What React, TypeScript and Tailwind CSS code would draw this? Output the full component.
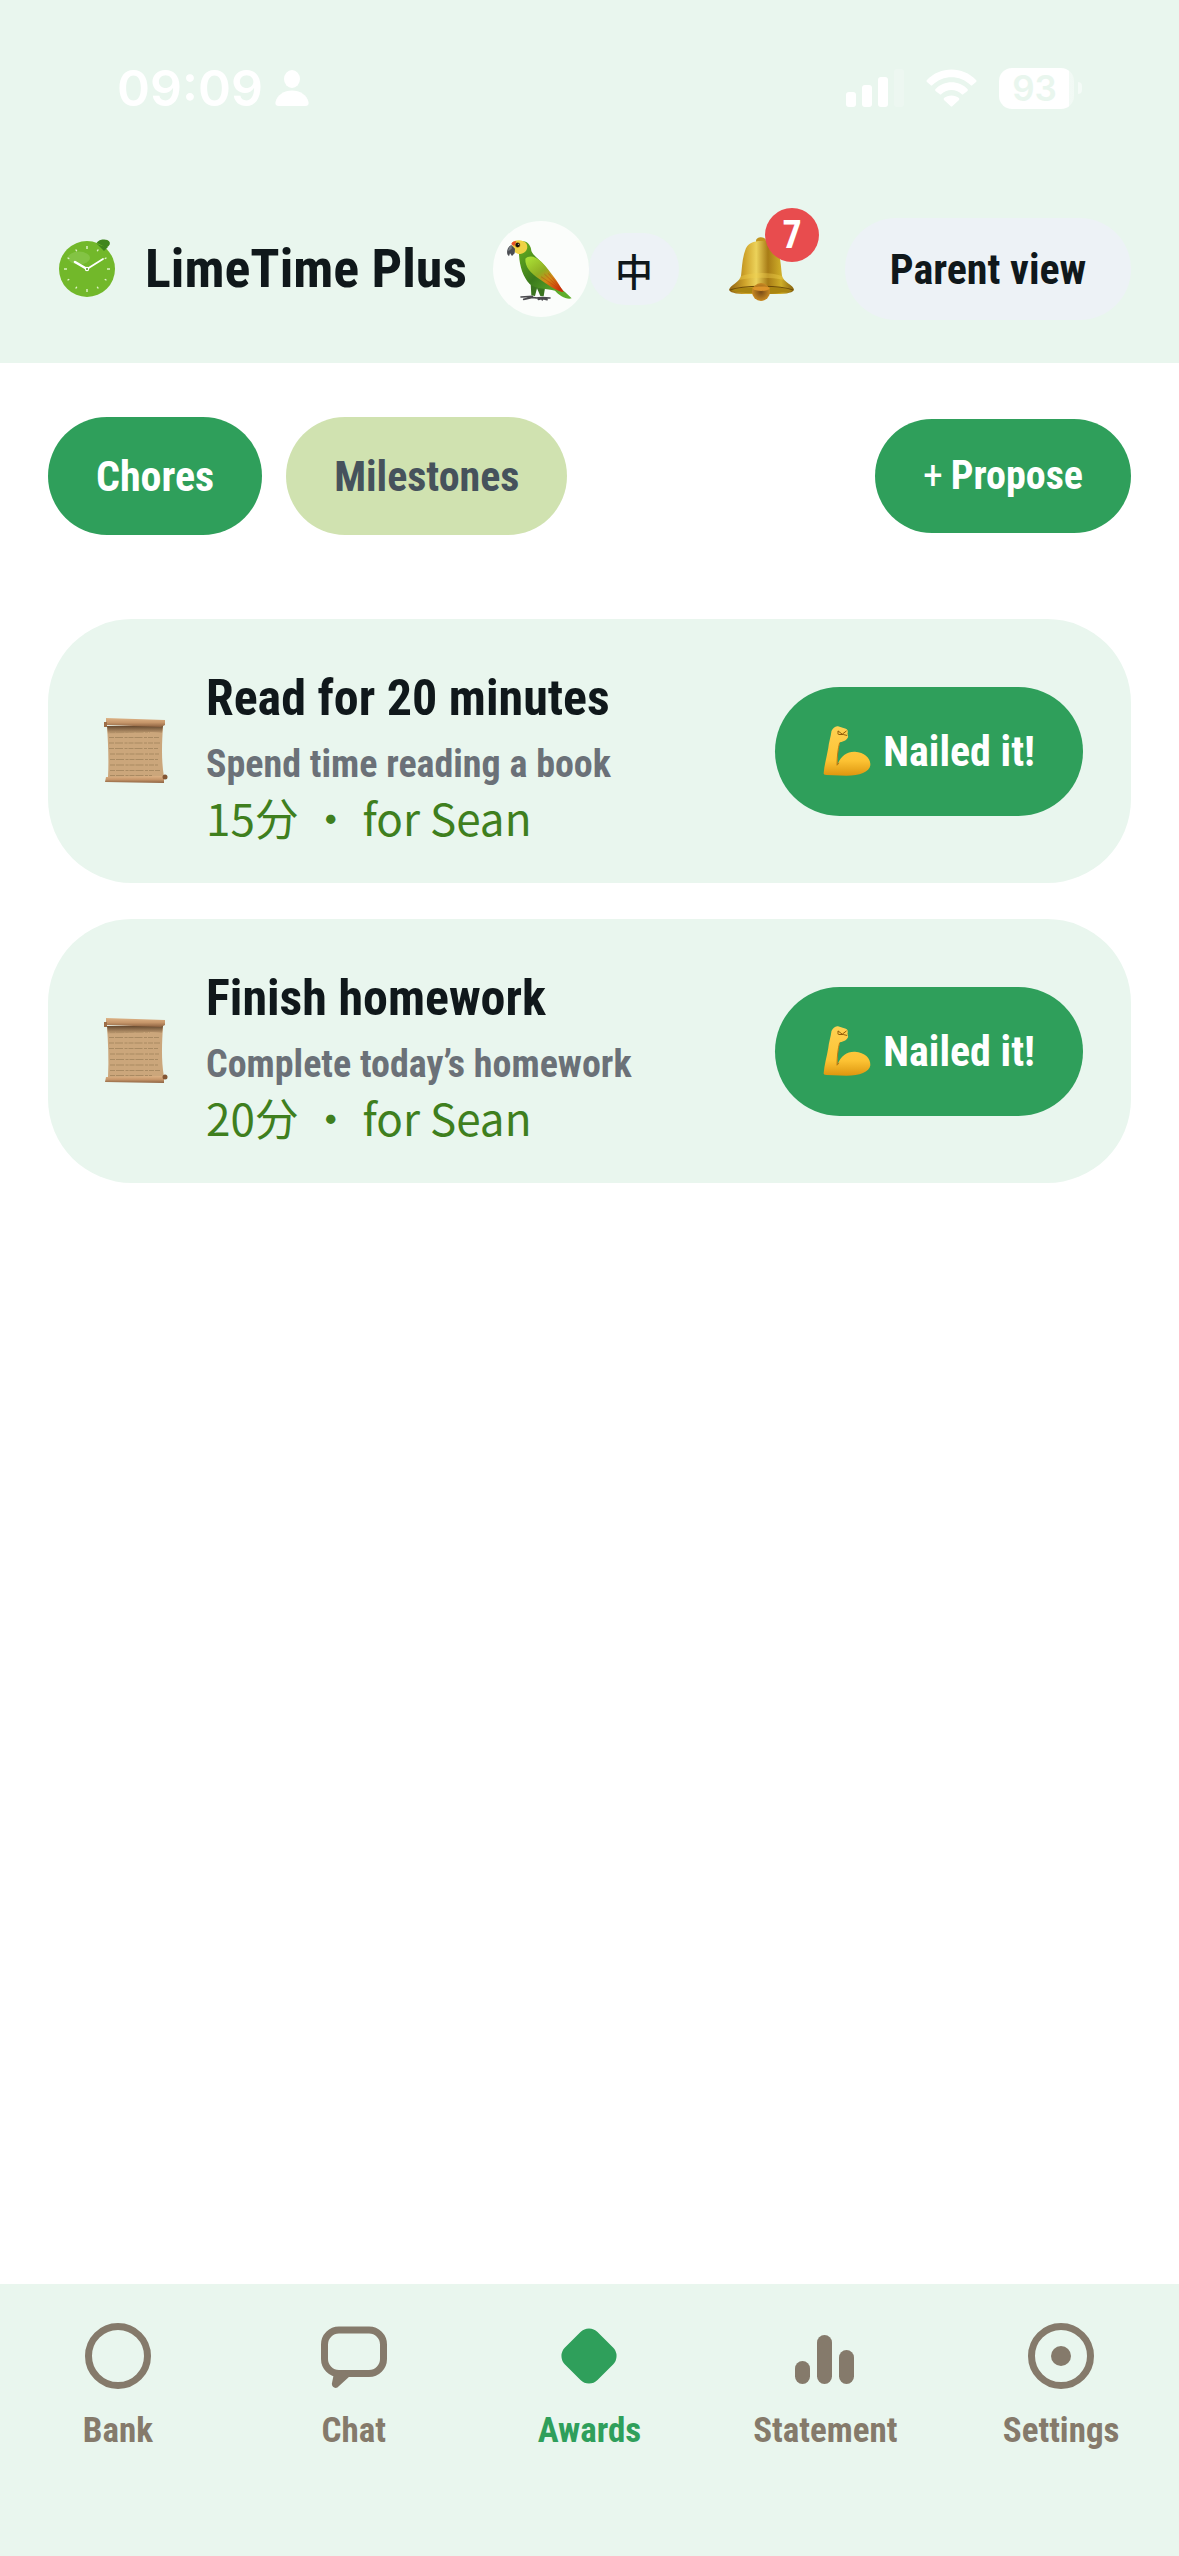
import { useState } from "react"
import clsx from "clsx"

type Tab = "chores" | "milestones"

const CHORES = [
  { id: 1, title: "Read for 20 minutes", note: "Spend time reading a book", minutes: 15, kid: "Sean" },
  { id: 2, title: "Finish homework", note: "Complete today’s homework", minutes: 20, kid: "Sean" },
]

/* ---------- status bar ---------- */

function StatusBar() {
  return (
    <div className="flex items-center justify-between pl-[117px] pr-[97px] pt-[60px] text-white">
      <div className="flex items-center gap-3">
        <span className="font-[Inter,sans-serif] text-[50px] leading-[56px] font-semibold">09:09</span>
        <svg width="34" height="36" viewBox="0 0 34 36" fill="currentColor" aria-hidden="true">
          <ellipse cx="17" cy="9" rx="8" ry="9" />
          <path d="M4 36C1 36 0 34.500 0.500 32 2 25 9 20.500 17 20.500S32 25 33.500 32C34 34.500 33 36 30 36Z" />
        </svg>
      </div>
      <div className="flex items-center gap-[22px]">
        <svg width="58" height="38" viewBox="0 0 58 38" fill="currentColor" aria-hidden="true">
          <rect x="0" y="23" width="10" height="15" rx="3" />
          <rect x="16" y="16" width="10" height="22" rx="3" />
          <rect x="32" y="8" width="10" height="30" rx="3" />
          <rect x="48" y="0" width="10" height="38" rx="3" opacity="0.2" />
        </svg>
        <svg width="51" height="38" viewBox="0 0 51 38" fill="currentColor" aria-hidden="true">
          <path d="M1 11C14 -3 37 -3 50 11Q51 12 50 13L46.500 16Q45.500 17 44.500 16C34 5.500 17 5.500 6.500 16Q5.500 17 4.500 16L1 13Q0 12 1 11Z" />
          <path d="M9.500 20C18 11 33 11 41.500 20Q42.300 21 41.500 22L37.500 25Q36.500 26 35.500 25C30 19.500 21 19.500 15.500 25Q14.500 26 13.500 25L9.500 22Q8.700 21 9.500 20Z" />
          <path d="M18 29C22 25.500 29 25.500 33 29Q33.700 30 33 31L26.500 37Q25.500 38 24.500 37L18 31Q17.300 30 18 29Z" />
        </svg>
        <div className="flex items-center gap-1">
          <div className="flex h-[41px] w-[75px] items-center justify-center rounded-[13px] bg-gradient-to-r from-white from-94% to-white/40 to-94% pr-1 font-[Inter,sans-serif] text-[35px] leading-[40px] font-semibold text-[#e9f6ee]">
            93
          </div>
          <div className="h-3 w-1 rounded-r-full bg-white/50" />
        </div>
      </div>
    </div>
  )
}

/* ---------- drawings ---------- */

function LimeLogo() {
  return (
    <svg width="68" height="68" viewBox="0 0 68 68" className="shrink-0" aria-hidden="true">
      <ellipse cx="50" cy="9" rx="7" ry="4.500" fill="#3f861d" transform="rotate(-10 50 9)" />
      <circle cx="34" cy="34" r="28" fill="#72b82a" />
      <path d="M43 8C46 10 51 12 55 12L51 16Z" fill="#3f861d" />
      <ellipse cx="26" cy="23" rx="11" ry="6.500" fill="#83c344" />
      <g stroke="#e3f5cd" strokeWidth="1.400">
        {[0, 30, 60, 90, 120, 150, 180, 210, 240, 270, 300, 330].map(a => (
          <path key={a} d={a % 90 === 0 ? "M34 11v3" : "M34 11.500v2"} transform={`rotate(${a} 34 34)`} />
        ))}
      </g>
      <path d="M34 34 22 27" stroke="#fff" strokeWidth="2.600" strokeLinecap="round" />
      <path d="M34 34 50 24" stroke="#fff" strokeWidth="1.800" strokeLinecap="round" />
      <circle cx="34" cy="34" r="2.200" fill="#fff" />
      <circle cx="34" cy="34" r="1" fill="#4d9418" />
    </svg>
  )
}

function Parrot() {
  return (
    <svg className="size-full" viewBox="42 33 288 288" aria-hidden="true">
      <defs>
        <linearGradient id="parrot-body" x1="120" y1="130" x2="240" y2="250" gradientUnits="userSpaceOnUse">
          <stop offset="0" stopColor="#5fa51f" />
          <stop offset="0.500" stopColor="#3b7a1c" />
          <stop offset="1" stopColor="#5fae2c" />
        </linearGradient>
        <linearGradient id="parrot-wing" x1="160" y1="140" x2="235" y2="245" gradientUnits="userSpaceOnUse">
          <stop offset="0" stopColor="#a8dc34" />
          <stop offset="0.400" stopColor="#8fae22" />
          <stop offset="0.650" stopColor="#d38a17" />
          <stop offset="1" stopColor="#d32d0a" />
        </linearGradient>
      </defs>
      <g fill="none" stroke="#4b4b4f" strokeWidth="5" strokeLinecap="round">
        <path d="M126 261 160 259M134 268 160 262 172 264M168 264 190 263 213 264M178 268 190 265 204 269M190 264v6" />
      </g>
      <path d="M154 205 157 256 168 258 174 235 184 258 194 259 199 228Z" fill="#3a7420" />
      <path d="M118 98C140 85 156 104 157 122C160 135 185 150 203 175C218 197 236 232 258 246L278 265C262 270 240 256 228 242C205 236 170 238 152 222C132 200 122 170 120 134Z" fill="url(#parrot-body)" />
      <path d="M139 146C150 134 170 138 188 156C214 184 238 218 254 246C238 246 202 222 180 206C156 190 138 172 139 146Z" fill="url(#parrot-wing)" />
      <g fill="none" stroke="#b23a10" strokeWidth="2" opacity="0.600">
        <path d="M186 200 246 240M196 192 249 241M208 190 250 240" />
      </g>
      <path d="M98 100C104 88 134 86 143 102C149 116 140 130 124 132C112 133 104 126 102 114Z" fill="#efd245" />
      <path d="M97 103C98 95 106 92 112 94L106 108Z" fill="#e8502a" />
      <path d="M98 106C88 108 82 120 85 133L90 139 93 130 99 138 107 130 108 116Z" fill="#4a4d52" />
      <path d="M98 106C91 109 87 116 88 124L98 116Z" fill="#7a7e85" />
      <circle cx="116" cy="105" r="8" fill="#c18a16" />
      <circle cx="116" cy="105" r="6.500" fill="#15110c" />
      <circle cx="118" cy="103" r="1.600" fill="#fff" />
    </svg>
  )
}

function Bell() {
  return (
    <svg width="66" height="66" viewBox="0 0 66 66" aria-hidden="true">
      <defs>
        <linearGradient id="bell-body" x1="0" x2="1">
          <stop offset="0" stopColor="#8f6110" />
          <stop offset="0.250" stopColor="#d0a52c" />
          <stop offset="0.420" stopColor="#ecd25a" />
          <stop offset="0.600" stopColor="#a87c16" />
          <stop offset="0.800" stopColor="#cfae28" />
          <stop offset="1" stopColor="#86620e" />
        </linearGradient>
        <radialGradient id="bell-clapper">
          <stop offset="0" stopColor="#7a4b17" />
          <stop offset="1" stopColor="#c98a22" />
        </radialGradient>
      </defs>
      <path d="M27 8V5C27 0 37 0 37 5V8Z" fill="#c0951f" />
      <path d="M16 15C18 7 25 5 32 5S46 7 49 15C52 23 52 33 53 40C54 46 65 49 65 54C62 59 47 58 32 58S3 59 0 54C1 49 11 46 12 40C13 33 13 23 16 15Z" fill="url(#bell-body)" />
      <path d="M12 40C24 36 42 36 53 40L55 44C42 41 24 41 10 44Z" fill="#f0cf4e" opacity="0.400" />
      <path d="M2 54C14 50 51 50 64 54C54 59 12 59 2 54Z" fill="#a98511" />
      <path d="M1 54C14 49 51 49 64 54" fill="none" stroke="#6d4c08" strokeWidth="1.200" />
      <circle cx="32" cy="56" r="9" fill="url(#bell-clapper)" />
      <path d="M23 52C27 50 38 50 41 52C39 56 26 56 23 52Z" fill="#dd942a" />
    </svg>
  )
}

function Scroll() {
  return (
    <svg width="64" height="68" viewBox="0 0 64 68" aria-hidden="true" className="shrink-0">
      <defs>
        <linearGradient id="scroll-roll" x1="0" y1="0" x2="0" y2="1">
          <stop offset="0" stopColor="#ddb285" />
          <stop offset="0.500" stopColor="#c6966a" />
          <stop offset="1" stopColor="#8d6240" />
        </linearGradient>
        <linearGradient id="scroll-shade" x1="0" y1="0" x2="0" y2="1">
          <stop offset="0" stopColor="#66492f" />
          <stop offset="1" stopColor="#cba67b" />
        </linearGradient>
      </defs>
      <path d="M3 9H59C58 25 57 42 60 60H4C5 42 4 25 3 9Z" fill="#cba67b" />
      <path d="M3 9H59L58 16C40 13 20 17 4 17Z" fill="url(#scroll-shade)" />
      <g stroke="#a98a62" strokeWidth="1.200" strokeDasharray="5 1 8 1.500 3 1">
        <path d="M6 15H46M5 20.500H55M5 26H56M5 31.500H54M6 37H55M6 42.500H54M6 48H54M6 53.500H56M6 58.500H48" />
      </g>
      <path d="M2 1 61 3V8L57 10 2 8Z" fill="url(#scroll-roll)" />
      <path d="M0 5H3V10H0Z" fill="#9c6d47" />
      <path d="M2 60 60 59V66L1 65Z" fill="url(#scroll-roll)" />
      <circle cx="61" cy="60" r="2.500" fill="#825634" />
    </svg>
  )
}

function Biceps() {
  return (
    <svg width="48" height="52" viewBox="248 205 147 157" aria-hidden="true">
      <defs>
        <linearGradient id="biceps" x1="0" y1="0" x2="0" y2="1">
          <stop offset="0" stopColor="#ffd152" />
          <stop offset="0.700" stopColor="#fcc233" />
          <stop offset="1" stopColor="#dd960f" />
        </linearGradient>
      </defs>
      <path d="M250 352C252 325 260 300 264 275C266 255 272 240 274 222C278 214 286 206 294 208L318 215C324 217 325 224 323 230L325 240C322 250 312 254 300 257C294 275 292 300 292 326C303 298 322 285 346 286C376 288 394 306 393 327C390 348 360 359 320 359L258 357C252 357 250 355 250 352Z" fill="url(#biceps)" />
      <path d="M299 258C294 276 291 300 291 327L297 320" fill="none" stroke="#b97710" strokeWidth="3" />
      <path d="M294 222 307 232 320 222M295 233H310L322 236M294 222V232" fill="none" stroke="#8e5908" strokeWidth="3" />
    </svg>
  )
}

/* ---------- bottom nav icons ---------- */

function RingIcon({ dot = false }: { dot?: boolean }) {
  return (
    <svg width="66" height="66" viewBox="0 0 66 66" aria-hidden="true">
      <circle cx="33" cy="33" r="29.500" fill="none" stroke="currentColor" strokeWidth="7" />
      {dot && <circle cx="33" cy="33" r="10" fill="currentColor" />}
    </svg>
  )
}

function ChatIcon() {
  return (
    <svg width="66" height="66" viewBox="0 0 66 66" aria-hidden="true">
      <rect x="3.500" y="7" width="59" height="43.500" rx="14.500" fill="none" stroke="currentColor" strokeWidth="7" />
      <path d="M13 50 11 60C10 64 15 67 18 63L29 53 24 47Z" fill="currentColor" />
    </svg>
  )
}

function DiamondIcon() {
  return (
    <svg width="66" height="66" viewBox="0 0 66 66" aria-hidden="true">
      <rect x="10" y="10" width="46" height="46" rx="12" fill="currentColor" transform="rotate(45 33 33)" />
    </svg>
  )
}

function BarsIcon() {
  return (
    <svg width="66" height="66" viewBox="0 0 66 66" fill="currentColor" aria-hidden="true">
      <rect x="3" y="38" width="15" height="23" rx="7.500" />
      <rect x="25" y="12" width="15" height="49" rx="7.500" />
      <rect x="47" y="27" width="15" height="34" rx="7.500" />
    </svg>
  )
}

const NAV = [
  { label: "Bank", icon: <RingIcon /> },
  { label: "Chat", icon: <ChatIcon /> },
  { label: "Awards", icon: <DiamondIcon />, active: true },
  { label: "Statement", icon: <BarsIcon /> },
  { label: "Settings", icon: <RingIcon dot /> },
]

function ChoreCard({ title, note, minutes, kid }: { title: string; note: string; minutes: number; kid: string }) {
  return (
    <li className="flex items-center rounded-[84px] bg-[#e9f6ee] py-10 pr-12 pl-14">
      <Scroll />
      <div className="ml-[38px] flex-1">
        <h2 className="text-[50px] leading-[78px] font-bold text-[#10181b]">{title}</h2>
        <p className="text-[38px] leading-[54px] font-bold text-[#6b7178]">{note}</p>
        <p className="font-['Noto_Sans_CJK_SC',sans-serif] text-[44px] leading-[52px] text-[#3f7f1e]">
          {minutes}分 · for {kid}
        </p>
      </div>
      <button type="button" className="flex h-[129px] items-center gap-3 rounded-full bg-[#2f9f5b] px-12 text-[42px] font-bold text-white">
        <Biceps /> Nailed it!
      </button>
    </li>
  )
}

export default function App() {
  const [tab, setTab] = useState<Tab>("chores")

  return (
    <div className="flex min-h-screen flex-col bg-white font-['Roboto_Condensed',Roboto,sans-serif] text-[#10181b]">
      <header className="bg-[#e9f6ee] pb-[43px]">
        <StatusBar />
        <div className="mt-[102px] flex items-center pr-12 pl-[53px]">
          <LimeLogo />
          <h1 className="ml-6 text-[54px] leading-[72px] font-bold whitespace-nowrap">LimeTime Plus</h1>
          <div className="ml-auto flex items-center">
            <button type="button" aria-label="Profile" className="size-24 overflow-hidden rounded-full bg-[#fbfdfb]"><Parrot /></button>
            <button type="button" className="h-[72px] w-[90px] rounded-full bg-[#edf2f6] font-['Noto_Sans_CJK_SC',sans-serif] text-[38px] font-medium">
              中
            </button>
            <button type="button" aria-label="Notifications" className="relative ml-[50px]">
              <Bell />
              <span className="absolute -top-7 -right-6 flex size-[54px] items-center justify-center rounded-full bg-[#e84c4e] text-[38px] font-bold text-white">
                7
              </span>
            </button>
            <button type="button" className="ml-[50px] h-[102px] w-[286px] rounded-full bg-[#edf2f6] text-[42px] font-bold">Parent view</button>
          </div>
        </div>
      </header>

      <main className="flex-1 px-12 pt-[54px]">
        <div className="flex items-center gap-6">
          {(["chores", "milestones"] as Tab[]).map(t => (
            <button key={t} type="button" onClick={() => setTab(t)} aria-pressed={tab === t}
              className={clsx("h-[118px] rounded-full px-12 text-[42px] font-bold capitalize",
                tab === t ? "bg-[#2f9f5b] text-white" : "bg-[#d0e2b0] text-[#46525c]")}>
              {t}
            </button>
          ))}
          <button type="button" className="ml-auto flex h-[114px] items-center gap-2 rounded-full bg-[#2f9f5b] px-12 text-[40px] font-bold text-white">
            <span className="font-normal">+</span> Propose
          </button>
        </div>

        <ul className="mt-[84px] flex flex-col gap-9">
          {CHORES.map(c => <ChoreCard key={c.id} {...c} />)}
        </ul>
      </main>

      <nav className="grid h-[272px] grid-cols-5 items-start bg-[#e9f6ee] pt-[39px]">
        {NAV.map(n => (
          <a key={n.label} href="#" aria-current={n.active ? "page" : undefined}
            className={clsx("flex flex-col items-center gap-4", n.active ? "text-[#2f9f5b]" : "text-[#857a6b]")}>
            {n.icon}
            <span className="text-[35px] leading-[52px] font-bold">{n.label}</span>
          </a>
        ))}
      </nav>
    </div>
  )
}
